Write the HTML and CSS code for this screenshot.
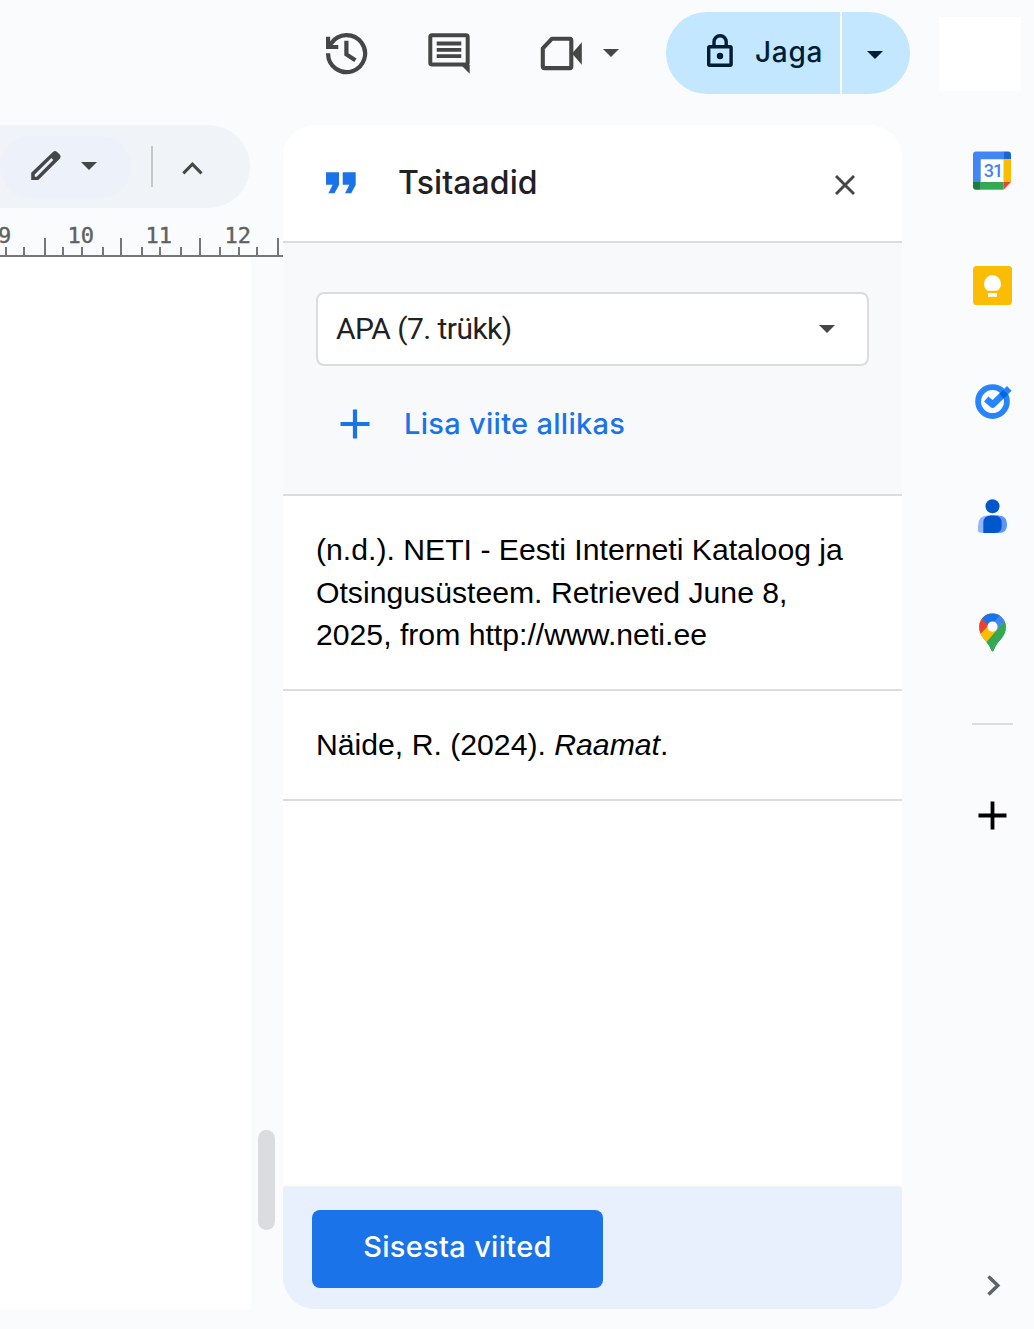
FILE: index.html
```html
<!DOCTYPE html>
<html lang="et">
<head>
<meta charset="utf-8">
<title>Tsitaadid</title>
<link rel="stylesheet" href="styles.css">
</head>
<body>
<div class="app">
  <header class="topbar">
    <svg class="icon history" width="46" height="46" viewBox="324 30 46 46" fill="none" stroke="#444746" stroke-width="4.2">
      <path d="M328.1 53.3A18.5 18.5 0 1 0 331.3 43.2L329 47"/>
      <path d="M328.1 36.7V47H338.3M346.4 40.8V54.4L355.4 60.3"/>
    </svg>
    <svg class="icon comment" width="46" height="46" viewBox="426 30 46 46">
      <path d="M461 65H469.7V73.8Z" fill="#444746"/>
      <rect x="430.3" y="35.3" width="37.4" height="29.2" rx="1.8" fill="none" stroke="#444746" stroke-width="4"/>
      <path d="M436.7 43.5H461.3M436.7 49.8H461.3M436.7 56.1H461.3" stroke="#444746" stroke-width="3.8"/>
    </svg>
    <svg class="icon video" width="46" height="46" viewBox="538 30 46 46">
      <path d="M551.8 38.8H569.7Q571.3 38.8 571.3 40.4V66.5Q571.3 68.1 569.7 68.1H544.4Q542.8 68.1 542.8 66.5V48.4Z" fill="none" stroke="#444746" stroke-width="4.1" stroke-linejoin="round"/>
      <path d="M572 53.4L581.8 42.2V64.8Z" fill="#444746"/>
    </svg>
    <svg class="caret" width="16" height="8" viewBox="0 0 16 8"><path d="M0 0H16L8 8Z"/></svg>
    <div class="share">
      <button class="share-main">
        <svg width="28" height="36" viewBox="706 33 28 36" fill="none" stroke="#001d35" stroke-width="3.4">
          <rect x="708.7" y="46.7" width="22.4" height="18.6" rx="1"/>
          <path d="M714 46V41.8A6.1 6.1 0 0 1 726.2 41.8V46"/>
          <circle cx="720" cy="56" r="3.2" fill="#001d35" stroke="none"/>
        </svg>
        <span class="share-label">Jaga</span>
      </button>
      <button class="share-more"><svg width="16" height="8" viewBox="0 0 16 8"><path d="M0 0H16L8 8Z" fill="#001d35"/></svg></button>
    </div>
    <div class="avatar"></div>
  </header>

  <main class="body">
    <section class="editor">
      <div class="toolbar">
        <div class="mode">
          <svg width="32" height="32" viewBox="30 150 32 32">
            <path fill="#444746" fill-rule="evenodd" d="M31.2 180V172.8L53.2 151.7Q55 150.4 56.8 151.7L60 154.8Q61.3 156.5 60 158.4L38.3 180ZM34.7 176.8H36.7L53.3 160L51.4 158.1L34.7 174.4Z"/>
          </svg>
          <svg class="caret" width="16" height="8" viewBox="0 0 16 8"><path d="M0 0H16L8 8Z"/></svg>
        </div>
        <div class="separator"></div>
        <svg width="22" height="14" viewBox="181 161 22 14"><path d="M183.3 173.4L192.4 164.1L201.5 173.4" fill="none" stroke="#444746" stroke-width="3"/></svg>
      </div>
      <svg class="ruler" width="283" height="49" viewBox="0 208 283 49">
        <g class="ruler-numbers">
          <text x="-2" y="243">9</text>
          <text x="67.5" y="243">10</text>
          <text x="145.5" y="243">11</text>
          <text x="224.5" y="243">12</text>
        </g>
        <path d="M45 238V256M121 238V256M200 238V256M278 238V256M6 247V256M24 247V256M63 247V256M82 247V256M103 247V256M142 247V256M160 247V256M181 247V256M220 247V256M239 247V256M257 247V256M0 256H283" stroke="#747775" stroke-width="2"/>
      </svg>
      <div class="canvas">
        <div class="sheet"></div>
        <div class="scrollbar"></div>
      </div>
    </section>

    <aside class="panel">
      <div class="panel-head">
        <svg width="32" height="22" viewBox="325 172 32 22" fill="#1a73e8"><path d="M326 172.3H339V185L334.5 193.2H328.4L332.6 184.8H326ZM342.7 172.3H355.7V185L351.2 193.2H345.1L349.3 184.8H342.7Z"/></svg>
        <h1 class="panel-title">Tsitaadid</h1>
        <svg class="close" width="20" height="20" viewBox="0 0 20 20"><path d="M1 1L19 19M19 1L1 19" stroke="#444746" stroke-width="2.9"/></svg>
      </div>
      <div class="controls">
        <div class="select">
          <span class="select-value">APA (7. trükk)</span>
          <svg class="caret" width="16" height="8" viewBox="0 0 16 8"><path d="M0 0H16L8 8Z"/></svg>
        </div>
        <button class="add">
          <svg width="30" height="30" viewBox="0 0 30 30"><path d="M15 .5V29.5M.5 15H29.5" stroke="#1a73e8" stroke-width="4.2"/></svg>
          <span class="add-label">Lisa viite allikas</span>
        </button>
      </div>
      <ul class="sources">
        <li class="source">(n.d.). NETI - Eesti Interneti Kataloog ja<br>Otsingusüsteem. Retrieved June 8,<br>2025, from http://www.neti.ee</li>
        <li class="source">Näide, R. (2024). <em>Raamat</em>.</li>
      </ul>
      <div class="panel-foot"><button class="insert"><span class="insert-label">Sisesta viited</span></button></div>
    </aside>

    <nav class="rail">
      <svg class="calendar" width="40" height="40" viewBox="0 0 40 40">
        <path d="M8 8H31V31H8Z" fill="#fff"/>
        <path d="M0 31V3.5Q0 .5 3 .5H30.7V8.2H7.7V31Z" fill="#4285f4"/>
        <path d="M30.5 .5H35Q38 .5 38 3.5V8.2H30.5Z" fill="#1967d2"/>
        <path d="M30.5 8.2H38V31H30.5Z" fill="#fbbc04"/>
        <path d="M7.7 31H30.5V38.7H7.7Z" fill="#34a853"/>
        <path d="M0 31H7.7V38.7H3Q0 38.7 0 35.7Z" fill="#188038"/>
        <path d="M30.5 31H38L30.5 38.7Z" fill="#ea4335"/>
        <text class="calendar-day" x="10.7" y="26.3">31</text>
      </svg>
      <svg class="keep" width="40" height="40" viewBox="0 0 40 40">
        <rect width="39" height="39" rx="3.5" fill="#fbbc04"/>
        <path d="M14.8 24.8C12.4 23.2 11 21 11 17.7A8.5 8.5 0 0 1 28 17.7C28 21 26.6 23.2 24.2 24.8ZM15 27H24V30.7H15Z" fill="#fff"/>
      </svg>
      <svg class="tasks" width="40" height="40" viewBox="973 382 40 40">
        <circle cx="992.5" cy="401.6" r="14.4" fill="none" stroke="#2684fc" stroke-width="5.8"/>
        <path d="M986.2 399L992.6 404.6L1009.3 388.4" fill="none" stroke="#2684fc" stroke-width="6.6" stroke-linejoin="round"/>
        <path d="M999.3 393.9L1003.2 389.9Q1006 391.9 1008 394.6L1003.6 398.6Q1001.8 395.8 999.3 393.9Z" fill="#0066da"/>
      </svg>
      <svg class="contacts" width="40" height="40" viewBox="973 497 40 40">
        <path d="M980.5 532.8Q978 532.8 978 530.3V526Q978 515.6 988 515.6H998V532.8Z" fill="#91b5ff"/>
        <path d="M990 515.5H998Q1007 515.5 1007 524V525Q1007 532.9 999 532.9H990Z" fill="#5c93ff"/>
        <path d="M983.3 532.9V523Q983.3 515.5 991 515.5H994Q1001.7 515.5 1001.7 523V526Q1001.7 532.9 995 532.9Z" fill="#0057cc"/>
        <circle cx="992.5" cy="506.2" r="7" fill="#0057cc"/>
      </svg>
      <svg class="maps" width="40" height="40" viewBox="973 612 40 40">
        <clipPath id="pin"><path d="M992.5 613.5C1000 613.5 1005.9 619.5 1005.9 627C1005.9 637.5 997 640.5 993.8 650Q992.5 652.8 991.2 650C988 640.5 979.2 637.5 979.2 627C979.2 619.5 985 613.5 992.5 613.5Z"/></clipPath>
        <g clip-path="url(#pin)">
          <path d="M976 610H1009V655H976Z" fill="#34a853"/>
          <path d="M976 610H1009V616L986.5 642.5L976 650Z" fill="#fbbc04"/>
          <path d="M1004 621.5L986.5 642.3L990 655H1009V615Z" fill="#34a853"/>
          <path d="M976 610H988L989 625L980.6 633.8L976 640Z" fill="#ea4335"/>
          <path d="M981.8 618L986 610H1000L1001 615L990 628Z" fill="#1a73e8"/>
          <path d="M1001 614.2L1012 612L1004 621.5L996 631L989 627Z" fill="#4285f4"/>
        </g>
        <circle cx="992.5" cy="626.7" r="5.1" fill="#fff"/>
      </svg>
      <div class="rail-divider"></div>
      <svg class="plus" width="29" height="29" viewBox="0 0 29 29"><path d="M14.5 .5V28.5M.5 14.5H28.5" stroke="#000" stroke-width="3.8"/></svg>
      <svg class="collapse" width="14" height="21" viewBox="0 0 14 21"><path d="M1.5 1.5L10.8 10.5L1.5 19.5" fill="none" stroke="#5f6368" stroke-width="3.5"/></svg>
    </nav>
  </main>
</div>
</body>
</html>
```
FILE: styles.css
```css
* { box-sizing: border-box; }
body { margin: 0; background: #fafbfd; font-family: Inter, "Open Sans", sans-serif; }
svg { display: block; flex: none; }
button { border: 0; padding: 0; background: none; font: inherit; display: flex; align-items: center; }
.app { width: 1034px; height: 1329px; display: flex; flex-direction: column; overflow: hidden; }
.caret { fill: #444746; }

/* top bar */
.topbar { height: 125px; display: flex; align-items: flex-start; padding-left: 324px; flex: none; }
.icon { margin-top: 30px; }
.comment { margin-left: 56px; }
.video { margin-left: 66px; }
.topbar > .caret { margin: 49px 0 0 19px; }
.share { display: flex; gap: 2px; height: 82px; margin: 12px 0 0 47px; }
.share-main { width: 174px; background: #c2e7ff; border-radius: 41px 0 0 41px; padding-left: 40px; }
.share-main svg { margin-top: -4px; }
.share-label { color: #001d35; font-size: 28px; font-weight: 500; line-height: 34px; margin: -2px 0 0 21px; letter-spacing: .7px; white-space: nowrap; }
.share-more { width: 68px; background: #c2e7ff; border-radius: 0 41px 41px 0; padding: 3px 0 0 25px; }
.avatar { width: 82px; height: 74px; background: #fff; margin: 17px 0 0 29px; }

.body { display: flex; flex: 1; min-height: 0; }

/* editor column */
.editor { width: 283px; display: flex; flex-direction: column; height: 1184px; }
.toolbar { width: 250px; height: 83px; background: #f0f3f8; border-radius: 0 42px 42px 0; display: flex; align-items: center; flex: none; }
.mode { width: 131px; height: 62px; background: #edf1fa; border-radius: 31px; display: flex; align-items: center; padding-left: 30px; gap: 19px; }
.mode svg { margin-top: -1px; }
.separator { width: 2px; height: 41px; background: #c7c7c7; margin: 0 28px 0 20px; }
.toolbar > svg { margin-top: 3px; }
.ruler { flex: none; }
.ruler-numbers { font: 22px "DejaVu Sans Mono", monospace; fill: #5f6161; stroke: #5f6161; stroke-width: .4px; }
.canvas { flex: 1; display: flex; }
.sheet { width: 251px; background: #fff; }
.scrollbar { width: 17px; height: 100px; border-radius: 9px; background: #dadce0; margin: 873px 0 0 7px; }

/* citations panel */
.panel { width: 619px; height: 1184px; background: #fff; border-radius: 32px; overflow: hidden; display: flex; flex-direction: column; }
.panel-head { height: 118px; border-bottom: 2px solid #dadce0; display: flex; align-items: center; padding: 0 47px 0 42px; flex: none; }
.panel-title { margin: -1px 0 0 41px; font-size: 32px; line-height: 38px; font-weight: 500; letter-spacing: .1px; color: #202124; }
.close { margin: 4px 0 0 auto; }
.controls { height: 253px; background: #f8f9fb; border-bottom: 2px solid #dadce0; padding: 49px 33px 0; flex: none; }
.select { height: 74px; border: 2px solid #dadce0; border-radius: 8px; background: #fff; display: flex; align-items: center; justify-content: space-between; padding: 0 32px 0 18px; }
.select-value { font: 30px/36px Roboto, sans-serif; letter-spacing: -.55px; color: #202124; white-space: nowrap; }
.add { margin: 38px 0 0 24px; height: 40px; gap: 34px; }
.add-label { color: #1a73e8; font-size: 29px; font-weight: 500; line-height: 36px; letter-spacing: .3px; white-space: nowrap; }
.sources { list-style: none; margin: 0; padding: 0; flex: 1; }
.source { padding: 33px 33px 32px; border-bottom: 2px solid #dadce0; font: 30.2px/42.5px "Liberation Sans", Arial, sans-serif; color: #000; white-space: nowrap; }
.source + .source { padding-bottom: 32.5px; }
.panel-foot { height: 121px; background: #e8effd; box-shadow: 0 -1px 3px rgba(60,64,67,.15); padding: 22px 29px; flex: none; }
.insert { width: 291px; height: 78px; border-radius: 8px; background: #1a73e8; justify-content: center; }
.insert-label { color: #fff; font-size: 29px; font-weight: 500; line-height: 36px; letter-spacing: .3px; margin-top: -5px; white-space: nowrap; }

/* add-on rail */
.rail { width: 132px; display: flex; flex-direction: column; padding-left: 71px; }
.calendar { margin-top: 26px; }
.calendar-day { font: 500 18px Roboto, sans-serif; fill: #4285f4; letter-spacing: -1px; }
.keep { margin-top: 75px; }
.tasks { margin-top: 76px; }
.contacts, .maps { margin-top: 75px; }
.rail-divider { width: 41px; height: 2px; background: #dadce0; margin: 71px 0 0 -1px; }
.plus { margin: 76px 0 0 5px; }
.collapse { margin: 445px 0 0 14px; }
```
